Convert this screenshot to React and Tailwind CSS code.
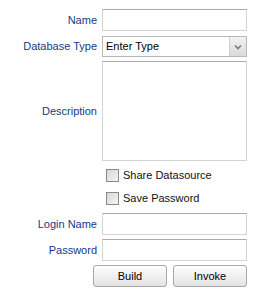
import { useState } from 'react'

const field = 'h-[22px] w-[145px] border border-[#d4d4d4] border-t-[#a9a9a9] bg-white px-[3px] text-[11px] outline-none'

function Label({ children }) {
  return <div className="w-[102px] shrink-0 pr-[5px] text-right text-[11px] text-[#163a84]">{children}</div>
}

function Check({ label, className }) {
  const [on, setOn] = useState(false)
  return (
    <label className={`flex h-[13px] items-center pl-[106px] leading-[13px] ${className}`}>
      <span
        onClick={() => setOn(!on)}
        className="flex h-[13px] w-[13px] items-center justify-center border border-[#8a8a8a] bg-gradient-to-br from-[#d8d8d8] to-[#f4f4f4] text-[10px] leading-none"
      >
        {on ? '✓' : ''}
      </span>
      <span className="ml-[4px] text-[11px] text-[#111]">{label}</span>
    </label>
  )
}

function Btn({ children }) {
  return (
    <button className="h-[22px] w-[74px] rounded-[3px] border border-[#a8a8a8] bg-gradient-to-b from-[#fdfdfd] to-[#e3e3e3] text-[11px] text-black">
      {children}
    </button>
  )
}

export default function App() {
  return (
    <div className="h-[292px] w-[258px] bg-white pt-[9px] font-['Liberation_Sans',Arial,sans-serif]">
      <div className="flex items-center">
        <Label>Name</Label>
        <input className={field} />
      </div>

      <div className="mt-[5px] flex items-center">
        <Label>Database Type</Label>
        <div className="flex h-[21px] w-[145px] items-stretch border border-[#b8b8b8] bg-white">
          <span className="flex flex-1 items-center pl-[3px] text-[11px] text-black">Enter Type</span>
          <span className="flex w-[17px] items-center justify-center border-l border-[#d0d0d0] bg-gradient-to-b from-[#f2f2f2] to-[#dadada]">
            <svg width="8" height="6" viewBox="0 0 8 6">
              <path d="M1 1.5 L4 4.5 L7 1.5" fill="none" stroke="#7a7a7a" strokeWidth="1.6" />
            </svg>
          </span>
        </div>
      </div>

      <div className="mt-[4px] flex items-center">
        <Label>Description</Label>
        <textarea className={`${field} h-[100px] resize-none`} />
      </div>

      <Check label="Share Datasource" className="mt-[8px]" />
      <Check label="Save Password" className="mt-[10px]" />

      <div className="mt-[8px] flex items-center">
        <Label>Login Name</Label>
        <input className={field} />
      </div>

      <div className="mt-[4px] flex items-center">
        <Label>Password</Label>
        <input type="password" className={field} />
      </div>

      <div className="mt-[4px] flex gap-[6px] pl-[93px]">
        <Btn>Build</Btn>
        <Btn>Invoke</Btn>
      </div>
    </div>
  )
}
